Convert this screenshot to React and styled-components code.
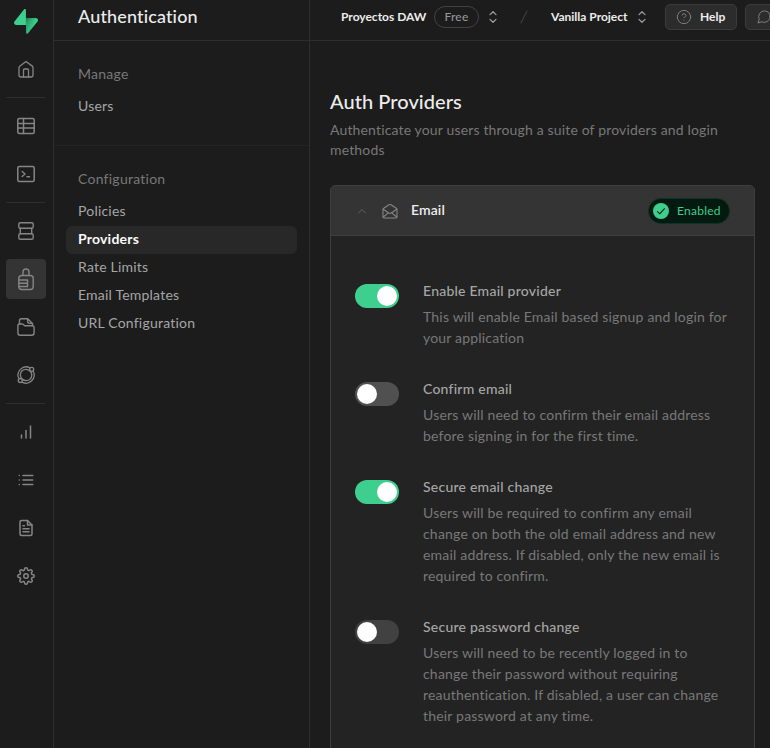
import React from "react";
import styled, { createGlobalStyle } from "styled-components";
import {
  FiBarChart,
  FiFileText,
  FiHelpCircle,
  FiList,
  FiMessageCircle,
  FiSettings,
} from "react-icons/fi";

const GlobalStyle = createGlobalStyle`
  *, *::before, *::after { box-sizing: border-box; }
  body {
    margin: 0;
    overflow: hidden;
    background: #1c1c1c;
    color: #ededed;
    font-family: Lato, "Liberation Sans", sans-serif;
    font-size: 14px;
    line-height: 20px;
  }
`;

const Shell = styled.div`
  display: flex;
  width: 770px;
  height: 748px;
  overflow: hidden;
`;

/* ---------- icon rail ---------- */

const Rail = styled.nav`
  display: flex;
  flex-direction: column;
  align-items: flex-start;
  gap: 8px;
  flex: 0 0 54px;
  padding: 9px 0 0 6px;
  border-right: 1px solid #2e2e2e;
`;

const LogoLink = styled.a`
  display: flex;
  justify-content: center;
  width: 40px;
  height: 32px;
`;

const RailButton = styled.a`
  display: flex;
  align-items: center;
  justify-content: center;
  width: 40px;
  height: 40px;
  border-radius: 4px;
  color: #858585;
  background: ${(p) => (p.$active ? "#343434" : "transparent")};
`;

const RailDivider = styled.div`
  width: 39px;
  height: 1px;
  background: #2e2e2e;
`;

const LineSvg = styled.svg`
  display: block;
  flex: none;
  overflow: visible;
  fill: none;
  stroke: currentColor;
  stroke-linecap: round;
  stroke-linejoin: round;
`;

/* ---------- sidebar ---------- */

const Sidebar = styled.aside`
  display: flex;
  flex-direction: column;
  flex: 0 0 256px;
  border-right: 1px solid #2e2e2e;
`;

const SidebarTitle = styled.h4`
  height: 41px;
  margin: 0;
  padding: 6px 24px 0;
  border-bottom: 1px solid #2e2e2e;
  font-size: 18px;
  font-weight: 500;
  line-height: 20px;
  letter-spacing: 0.14px;
`;

const MenuGroup = styled.section`
  padding: 23px 12px 24px;

  & + & {
    border-top: 1px solid #242424;
  }
`;

const MenuHeading = styled.div`
  padding: 0 12px;
  margin-bottom: 9px;
  color: #787878;
  letter-spacing: 0.25px;
`;

const MenuItem = styled.a`
  display: block;
  height: 28px;
  padding: 0 12px;
  border-radius: 6px;
  line-height: 26px;
  letter-spacing: 0.21px;
  color: ${(p) => (p.$active ? "#fafafa" : "#a6a6a6")};
  font-weight: ${(p) => (p.$active ? 700 : 400)};
  background: ${(p) => (p.$active ? "#282828" : "transparent")};
`;

/* ---------- top bar ---------- */

const Main = styled.main`
  flex: 1 0 460px;
  min-width: 0;
`;

const TopBar = styled.header`
  display: flex;
  align-items: flex-start;
  width: 460px;
  height: 41px;
  padding: 4px 0 0 31px;
  overflow: hidden;
  border-bottom: 1px solid #2e2e2e;
  font-size: 12px;
  font-weight: 700;
  line-height: 26px;
  white-space: nowrap;
`;

const Crumb = styled.div`
  display: flex;
  align-items: center;
  flex: none;
  height: 26px;
  width: ${(p) => p.$width}px;
`;

const CrumbName = styled.span`
  flex: 0 0 ${(p) => p.$width}px;
`;

const PlanPill = styled.span`
  flex: none;
  width: 45px;
  height: 22px;
  margin-right: 10px;
  border: 1px solid #424242;
  border-radius: 11px;
  color: #969696;
  font-weight: 500;
  letter-spacing: 0.2px;
  line-height: 20px;
  text-align: center;
`;

const Slash = styled.div`
  display: flex;
  flex: none;
  width: 31px;
  height: 26px;
  align-items: center;
  color: #444444;
`;

const ToolButton = styled.button`
  display: flex;
  align-items: center;
  flex: 0 0 ${(p) => p.$width}px;
  height: 26px;
  margin: 0 8px 0 0;
  padding: 0 10px;
  gap: 8px;
  border: 1px solid #3b3b3b;
  border-radius: 5px;
  background: #2c2c2c;
  color: #ededed;
  font: 700 12px/24px Lato, "Liberation Sans", sans-serif;

  svg {
    flex: none;
    color: #7e7e7e;
    stroke-width: 1.5;
  }
`;

/* ---------- page ---------- */

const Page = styled.div`
  padding: 50px 15px 0 20px;
`;

const PageTitle = styled.h1`
  margin: 0;
  font-size: 20px;
  font-weight: 500;
  line-height: 20px;
  letter-spacing: 0.05px;
`;

const PageLead = styled.p`
  margin: 9px 0 25px;
  color: #787878;
  letter-spacing: 0.155px;
`;

const Card = styled.section`
  width: 425px;
  height: 600px;
  border: 1px solid #3e3e3e;
  border-radius: 5px;
  background: #232323;
  overflow: hidden;
`;

const CardHeader = styled.header`
  display: flex;
  align-items: center;
  height: 50px;
  padding: 0 24px;
  border-bottom: 1px solid #3e3e3e;
  background: #343434;
  color: #858585;
`;

const MailSlot = styled.span`
  display: flex;
  margin-left: 13px;
`;

const CardName = styled.span`
  flex: 1;
  margin-left: 13px;
  padding-bottom: 2px;
  color: #ededed;
  font-weight: 600;
  letter-spacing: 0.1px;
`;

const StatusBadge = styled.span`
  display: flex;
  align-items: center;
  gap: 8px;
  width: 82px;
  height: 26px;
  padding-left: 4px;
  border: 1px solid #0c3323;
  border-radius: 13px;
  background: #04190f;
  color: #3ecf8e;
  font-size: 12px;
  letter-spacing: 0.25px;
`;

const Settings = styled.div`
  display: flex;
  flex-direction: column;
  gap: 31px;
  padding: 45px 24px 0;
`;

const Setting = styled.div`
  display: flex;
  gap: 24px;
`;

const Toggle = styled.button`
  display: flex;
  flex: 0 0 44px;
  justify-content: ${(p) => (p.$on ? "flex-end" : "flex-start")};
  height: 24px;
  margin: 3px 0 0;
  padding: 2px;
  border: 0;
  border-radius: 12px;
  background: ${(p) => (p.$on ? "#3ecf8e" : p.$muted ? "#414141" : "#505050")};
`;

const Knob = styled.span`
  width: 20px;
  height: 20px;
  border-radius: 50%;
  background: #ffffff;
`;

const SettingText = styled.div`
  white-space: nowrap;
`;

const SettingTitle = styled.div`
  margin-bottom: 5px;
  color: #a6a6a6;
  font-weight: 500;
  letter-spacing: 0.23px;
`;

const SettingLine = styled.div`
  color: #787878;
  line-height: 21px;
  letter-spacing: 0.19px;
`;

/* ---------- icons ---------- */

const Line = ({ width = 20, height = 20, stroke = 1.3, children }) => (
  <LineSvg
    width={width}
    height={height}
    viewBox={`0 0 ${width} ${height}`}
    strokeWidth={stroke}
  >
    {children}
  </LineSvg>
);

const Logo = () => (
  <svg width="24" height="25" viewBox="0 0 109 113">
    <defs>
      <linearGradient id="bolt" x1="53.97" y1="54.97" x2="94.16" y2="71.83" gradientUnits="userSpaceOnUse">
        <stop stopColor="#249361" />
        <stop offset="1" stopColor="#3ecf8e" />
      </linearGradient>
      <linearGradient id="shade" x1="36.16" y1="30.58" x2="54.48" y2="65.08" gradientUnits="userSpaceOnUse">
        <stop />
        <stop offset="1" stopOpacity="0" />
      </linearGradient>
    </defs>
    <path
      d="M63.7076 110.284C60.8481 113.885 55.0502 111.912 54.9813 107.314L53.9738 40.0627H99.1935C107.384 40.0627 111.952 49.5228 106.859 55.9374Z"
      fill="url(#bolt)"
    />
    <path
      d="M63.7076 110.284C60.8481 113.885 55.0502 111.912 54.9813 107.314L53.9738 40.0627H99.1935C107.384 40.0627 111.952 49.5228 106.859 55.9374Z"
      fill="url(#shade)"
      fillOpacity="0.2"
    />
    <path
      d="M45.317 2.07103C48.1765 -1.53037 53.9745 0.442937 54.0434 5.041L54.4849 72.2922H9.83113C1.64038 72.2922 -2.92775 62.8321 2.1655 56.4175Z"
      fill="#3ecf8e"
    />
  </svg>
);

const HomeIcon = () => (
  <Line>
    <path d="M10 2.5 4 6.9C3.300 7.400 3 8 3 8.800V16c0 1.200.8 2 2 2h10c1.200 0 2-.8 2-2V8.800c0-.8-.3-1.400-1-1.900z" />
    <path d="M7.500 18v-7c0-.7.3-1 1-1h3c.7 0 1 .3 1 1v7" />
  </Line>
);

const TableIcon = () => (
  <Line stroke={1.5}>
    <rect x="1.8" y="2.5" width="16.4" height="15" rx="1.5" />
    <path d="M1.8 7.5h16.4M1.800 12h16.400M7.500 2.500v15" />
  </Line>
);

const SqlIcon = () => (
  <Line stroke={1.5}>
    <rect x="1.8" y="2.5" width="16.4" height="15" rx="1.5" />
    <path d="M6.200 7.500 9 10l-2.800 2.500M11 12.700h2.500" />
  </Line>
);

const DatabaseIcon = () => (
  <Line stroke={1.4}>
    <rect x="2.8" y="1.7" width="14.4" height="5.6" rx="1.6" />
    <rect x="2.8" y="12.7" width="14.4" height="5.6" rx="1.6" />
    <path d="M4.300 7.300v5.400M15.700 7.300v5.400" />
  </Line>
);

const LockIcon = () => (
  <Line height={24} stroke={1.4}>
    <rect x="2.8" y="8.5" width="14.4" height="14" rx="3" />
    <path d="M7 8.500V5a3 3 0 0 1 6 0v3.500M3 13h8.500v6.500H3M3 16.200h8.500" />
  </Line>
);

const StorageIcon = () => (
  <Line stroke={1.4}>
    <path d="M1.900 8.500c0-.9.500-1.500 1.400-1.500h2.900c.5 0 .8.200 1.200.500l1 .900c.3.300.700.400 1.200.400h6.700c1.100 0 1.800.700 1.800 1.700V15.800c0 1.500-1 2.500-2.500 2.500H4.400c-1.500 0-2.500-1-2.500-2.500z" />
    <path d="M3.500 7V3.500c0-1.100.7-1.800 1.800-1.800h6.400L16.500 6.400v2.200M11.700 1.900v2.700c0 1.100.700 1.800 1.800 1.800h2.800" />
  </Line>
);

const RealtimeIcon = () => (
  <Line>
    <path d="M13.900 2.800A8.200 8.200 0 0 0 2.900 13.800M6.100 17.200A8.200 8.200 0 0 0 17.200 6.200" />
    <path d="M13.900 6A5.500 5.500 0 0 0 5.900 13.600M6.300 14A5.500 5.500 0 0 0 14.200 6.300" />
    <circle cx="15.7" cy="4.3" r="2" />
    <circle cx="4.3" cy="15.5" r="2" />
  </Line>
);

const UpDownIcon = () => (
  <Line width={8} height={12} stroke={1.2}>
    <path d="M1 3.600 4 .7l3 2.900M1 8.400l3 2.900 3-2.900" stroke="#a0a0a0" />
  </Line>
);

const ChevronUpIcon = () => (
  <Line width={14} height={14} stroke={1}>
    <path d="M3.500 9l3.500-3.500L10.500 9" stroke="#606060" />
  </Line>
);

const MailOpenIcon = () => (
  <Line width={16} height={16} stroke={1.1}>
    <path d="M1 6.600c0-.6.200-1 .7-1.300L7 1.800c.6-.4 1.400-.4 2 0l5.300 3.500c.5.300.7.700.7 1.300v7.200c0 .7-.5 1.200-1.200 1.200H2.200c-.7 0-1.200-.5-1.200-1.200z" />
    <path d="M1.200 6.200 6.800 10c.8.500 1.600.5 2.400 0l5.600-3.800M1.300 14l5-4.200M14.700 14l-5-4.200" />
  </Line>
);

const CheckIcon = () => (
  <svg width="16" height="16" viewBox="0 0 16 16">
    <circle cx="8" cy="8" r="8" fill="#3ecf8e" />
    <path d="M4.300 8.400 6.800 10.800 11.700 5.400" fill="none" stroke="#04190f" strokeWidth="1.1" />
  </svg>
);

/* ---------- data ---------- */

const RAIL = [
  [<HomeIcon />],
  [<TableIcon />, <SqlIcon />],
  [<DatabaseIcon />, <LockIcon />, <StorageIcon />, <RealtimeIcon />],
  [
    <FiBarChart size={18} />,
    <FiList size={18} />,
    <FiFileText size={18} />,
    <FiSettings size={18} />,
  ],
];

const CONFIG_ITEMS = [
  "Policies",
  "Providers",
  "Rate Limits",
  "Email Templates",
  "URL Configuration",
];

const SETTINGS = [
  {
    title: "Enable Email provider",
    on: true,
    lines: ["This will enable Email based signup and login for", "your application"],
  },
  {
    title: "Confirm email",
    lines: [
      "Users will need to confirm their email address",
      "before signing in for the first time.",
    ],
  },
  {
    title: "Secure email change",
    on: true,
    lines: [
      "Users will be required to confirm any email",
      "change on both the old email address and new",
      "email address. If disabled, only the new email is",
      "required to confirm.",
    ],
  },
  {
    title: "Secure password change",
    muted: true,
    lines: [
      "Users will need to be recently logged in to",
      "change their password without requiring",
      "reauthentication. If disabled, a user can change",
      "their password at any time.",
    ],
  },
];

export default function App() {
  return (
    <Shell>
      <GlobalStyle />
      <Rail>
        <LogoLink>
          <Logo />
        </LogoLink>
        {RAIL.map((group, g) => (
          <React.Fragment key={g}>
            {g > 0 && <RailDivider />}
            {group.map((icon, i) => (
              <RailButton key={i} $active={g === 2 && i === 1}>
                {icon}
              </RailButton>
            ))}
          </React.Fragment>
        ))}
      </Rail>

      <Sidebar>
        <SidebarTitle>Authentication</SidebarTitle>
        <MenuGroup>
          <MenuHeading>Manage</MenuHeading>
          <MenuItem>Users</MenuItem>
        </MenuGroup>
        <MenuGroup>
          <MenuHeading>Configuration</MenuHeading>
          {CONFIG_ITEMS.map((name) => (
            <MenuItem key={name} $active={name === "Providers"}>
              {name}
            </MenuItem>
          ))}
        </MenuGroup>
      </Sidebar>

      <Main>
        <TopBar>
          <Crumb $width={179}>
            <CrumbName $width={93}>Proyectos DAW</CrumbName>
            <PlanPill>Free</PlanPill>
            <UpDownIcon />
          </Crumb>
          <Slash>
            <Line width={8} height={12} stroke={1}>
              <path d="M7 0 1 12" />
            </Line>
          </Slash>
          <Crumb $width={114}>
            <CrumbName $width={87}>Vanilla Project</CrumbName>
            <UpDownIcon />
          </Crumb>
          <ToolButton $width={72}>
            <FiHelpCircle size={16} />
            Help
          </ToolButton>
          <ToolButton $width={60}>
            <FiMessageCircle size={16} />
          </ToolButton>
        </TopBar>

        <Page>
          <PageTitle>Auth Providers</PageTitle>
          <PageLead>
            Authenticate your users through a suite of providers and login
            <br />
            methods
          </PageLead>

          <Card>
            <CardHeader>
              <ChevronUpIcon />
              <MailSlot>
                <MailOpenIcon />
              </MailSlot>
              <CardName>Email</CardName>
              <StatusBadge>
                <CheckIcon />
                Enabled
              </StatusBadge>
            </CardHeader>
            <Settings>
              {SETTINGS.map((s) => (
                <Setting key={s.title}>
                  <Toggle $on={s.on} $muted={s.muted}>
                    <Knob />
                  </Toggle>
                  <SettingText>
                    <SettingTitle>{s.title}</SettingTitle>
                    {s.lines.map((line) => (
                      <SettingLine key={line}>{line}</SettingLine>
                    ))}
                  </SettingText>
                </Setting>
              ))}
            </Settings>
          </Card>
        </Page>
      </Main>
    </Shell>
  );
}
